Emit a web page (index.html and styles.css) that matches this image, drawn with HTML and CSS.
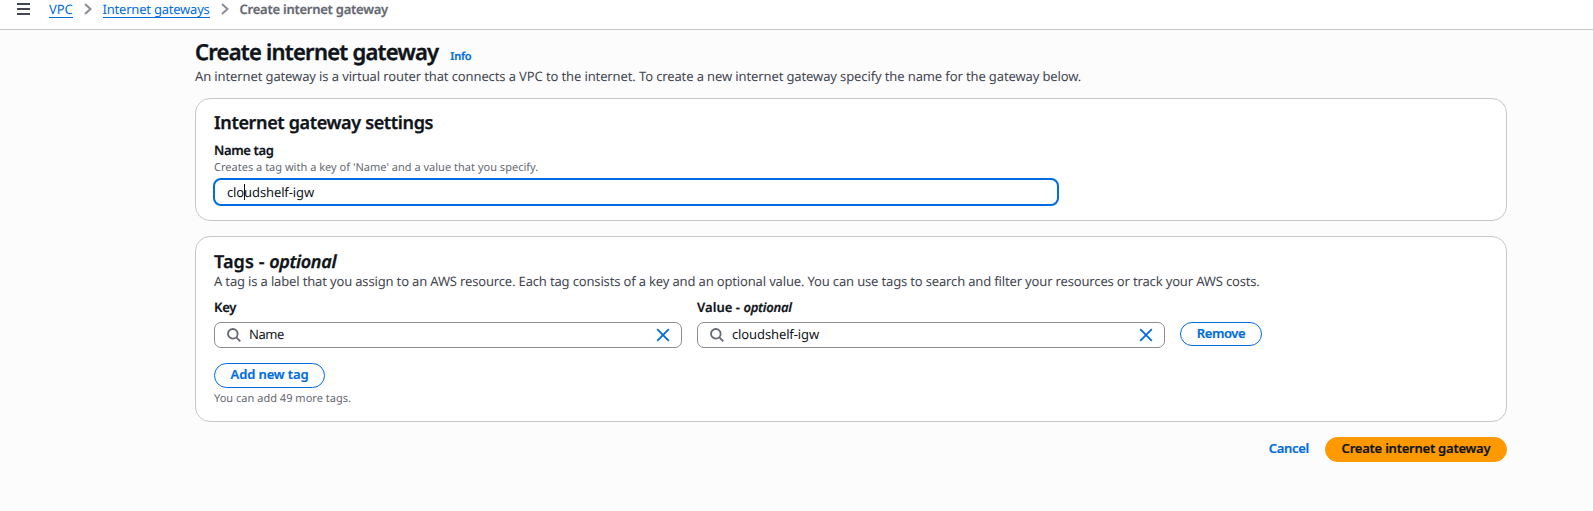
FILE: index.html
```html
<!DOCTYPE html>
<html lang="en">
<head>
<meta charset="utf-8">
<title>Create internet gateway</title>
<link rel="stylesheet" href="styles.css">
</head>
<body>
<header class="topbar">
  <svg class="menu-icon" width="13" height="12" viewBox="0 0 13 12"><path d="M0 1h13M0 6h13M0 11h13"/></svg>
  <nav class="crumbs">
    <a class="crumb-link vpc">VPC</a>
    <svg class="chevron" width="8" height="12" viewBox="0 0 8 12"><path d="M1 1l5.5 5L1 11"/></svg>
    <a class="crumb-link">Internet gateways</a>
    <svg class="chevron" width="8" height="12" viewBox="0 0 8 12"><path d="M1 1l5.5 5L1 11"/></svg>
    <span class="crumb-current">Create internet gateway</span>
  </nav>
</header>
<main class="page">
  <div class="title-row"><h1 class="title">Create internet gateway</h1><a class="info">Info</a></div>
  <p class="lead">An internet gateway is a virtual router that connects a VPC to the internet. To create a new internet gateway specify the name for the gateway below.</p>

  <section class="card settings">
    <h2 class="card-title">Internet gateway settings</h2>
    <div class="label name-label">Name tag</div>
    <div class="hint">Creates a tag with a key of 'Name' and a value that you specify.</div>
    <div class="input focused"><span class="value">clo<i class="caret"></i>udshelf-igw</span></div>
  </section>

  <section class="card tags">
    <h2 class="card-title tags-title">Tags - <em class="opt">optional</em></h2>
    <p class="tags-desc">A tag is a label that you assign to an AWS resource. Each tag consists of a key and an optional value. You can use tags to search and filter your resources or track your AWS costs.</p>
    <div class="tag-grid">
      <div class="label key-label">Key</div>
      <div class="label value-label">Value - <em class="opt-small">optional</em></div>
      <span></span>
      <div class="input search">
        <svg class="glass" width="14" height="14" viewBox="0 0 14 14"><circle cx="5.8" cy="5.8" r="4.8"/><path d="M9.3 9.3l4 4"/></svg>
        <span class="value name-value">Name</span>
        <svg class="clear" width="14" height="14" viewBox="0 0 14 14"><path d="M1.2 1.2l11.6 11.6M12.8 1.2L1.2 12.8"/></svg>
      </div>
      <div class="input search">
        <svg class="glass" width="14" height="14" viewBox="0 0 14 14"><circle cx="5.8" cy="5.8" r="4.8"/><path d="M9.3 9.3l4 4"/></svg>
        <span class="value">cloudshelf-igw</span>
        <svg class="clear" width="14" height="14" viewBox="0 0 14 14"><path d="M1.2 1.2l11.6 11.6M12.8 1.2L1.2 12.8"/></svg>
      </div>
      <button class="btn remove">Remove</button>
    </div>
    <button class="btn add">Add new tag</button>
    <div class="hint more">You can add 49 more tags.</div>
  </section>

  <footer class="actions">
    <button class="cancel">Cancel</button>
    <button class="btn primary">Create internet gateway</button>
  </footer>
</main>
</body>
</html>
```
FILE: styles.css
```css
* { box-sizing: border-box; margin: 0; padding: 0; }
body {
  background: #fcfcfd;
  color: #0f141a;
  font: 400 13px/18px "Noto Sans", sans-serif;
  text-rendering: geometricPrecision;
  min-height: 511px;
}
svg { display: block; flex: none; fill: none; }
.topbar {
  height: 30px;
  padding: 0 0 11px 17px;
  display: flex;
  align-items: center;
  background: #fff;
  border-bottom: 1px solid #c6c6cd;
}
.menu-icon { stroke: #424650; stroke-width: 1.8; }
.crumbs { display: flex; align-items: center; margin-left: 19px; }
.crumb-link {
  color: #006ce0;
  letter-spacing: -.22px;
  height: 18px;
  border-bottom: 1px solid #006ce0;
}
.vpc { letter-spacing: -.1px; }
.chevron { stroke: #8c8c94; stroke-width: 2; margin: 0 11px; }
.crumb-current { color: #656871; font-weight: 600; letter-spacing: -.25px; }
.crumb-current, .label, .info, .btn, .cancel { -webkit-text-stroke: .2px currentColor; }

.page { width: 1312px; margin-left: 195px; padding-top: 9px; }
.title-row { display: flex; align-items: baseline; gap: 12px; height: 27px; }
.title { font-size: 22px; line-height: 27px; font-weight: 600; letter-spacing: -.76px; -webkit-text-stroke: .4px currentColor; }
.info { color: #006ce0; font-size: 11px; font-weight: 600; letter-spacing: -.2px; }
.lead { line-height: 20px; color: #424650; letter-spacing: -.12px; }

.card { background: #fff; border: 1px solid #c6c6cd; border-radius: 15px; }
.settings { margin-top: 12px; padding: 12px 18px 14px; }
.tags { margin-top: 15px; padding: 14px 18px 14px; }
.card-title { font-size: 18px; line-height: 24px; font-weight: 600; letter-spacing: -.35px; -webkit-text-stroke: .3px currentColor; }
.tags-title { height: 21px; line-height: 22px; letter-spacing: .1px; }
.opt { letter-spacing: -.35px; }
.label { font-weight: 600; letter-spacing: -.37px; }
.name-label { margin-top: 6px; }
.key-label { letter-spacing: -.2px; }
.value-label { letter-spacing: .05px; }
.opt-small { letter-spacing: -.25px; }
.hint { margin-top: 1px; font-size: 11px; line-height: 16px; color: #656871; letter-spacing: .015px; }
.tags-desc { color: #424650; letter-spacing: -.16px; }

.input {
  display: flex;
  align-items: center;
  height: 26px;
  background: #fff;
  border: 1px solid #8c8c94;
  border-radius: 7px;
}
.focused {
  width: 846px;
  height: 28px;
  margin: 2px 0 0 -1px;
  padding-left: 12px;
  border: 2px solid #006ce0;
  border-radius: 8px;
}
.value { letter-spacing: -.119px; }
.search .value { padding-bottom: 2px; }
.search .name-value { letter-spacing: -.45px; }
.caret {
  display: inline-block;
  width: 1px;
  height: 16px;
  margin-right: -1px;
  vertical-align: -3px;
  background: #0f141a;
}
.tag-grid {
  display: grid;
  grid-template-columns: 468px 468px auto;
  justify-content: start;
  column-gap: 15px;
  row-gap: 6px;
  margin-top: 8px;
}
.search { padding: 0 11px 0 12px; gap: 8px; }
.glass { stroke: #656871; stroke-width: 1.8; }
.clear { stroke: #006ce0; stroke-width: 1.8; margin-left: auto; }

.btn {
  display: block;
  border: 1px solid #006ce0;
  border-radius: 13px;
  background: #fff;
  color: #006ce0;
  font: inherit;
  font-weight: 600;
  line-height: 20px;
  padding-bottom: 2px;
}
.remove { width: 82px; height: 24px; letter-spacing: -.38px; }
.add { width: 111px; height: 25px; margin-top: 15px; padding-bottom: 3px; letter-spacing: -.12px; }
.more { margin-top: 3px; }
.actions { display: flex; justify-content: flex-end; align-items: center; gap: 16px; margin-top: 15px; }
.cancel { border: 0; background: none; color: #006ce0; font: inherit; font-weight: 600; letter-spacing: -.3px; padding-bottom: 3px; }
.primary { width: 182px; height: 25px; padding-bottom: 3px; border-color: #f90; background: #f90; color: #0f141a; letter-spacing: -.23px; }
```
